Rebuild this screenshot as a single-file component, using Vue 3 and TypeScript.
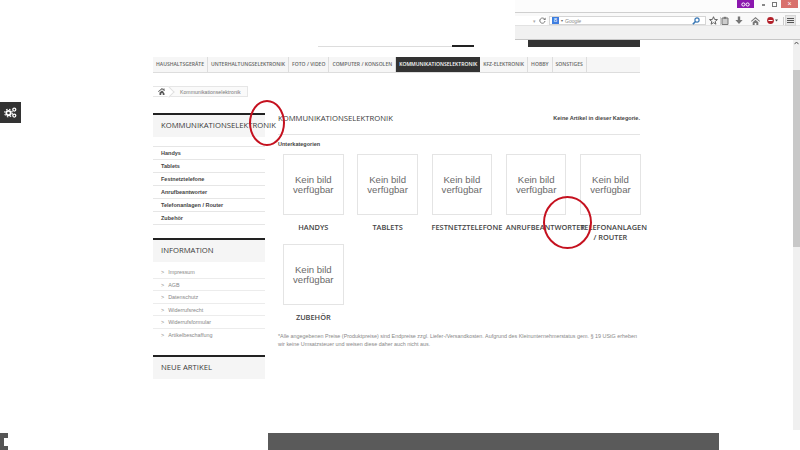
<script setup lang="ts">
const navItems = [
  'Haushaltsgeräte',
  'Unterhaltungselektronik',
  'Foto / Video',
  'Computer / Konsolen',
  'Kommunikationselektronik',
  'KFZ-Elektronik',
  'Hobby',
  'Sonstiges',
];
const subNav = ['Handys', 'Tablets', 'Festnetztelefone', 'Anrufbeantworter', 'Telefonanlagen / Router', 'Zubehör'];
const infoLinks = ['Impressum', 'AGB', 'Datenschutz', 'Widerrufsrecht', 'Widerrufsformular', 'Artikelbeschaffung'];
const tiles = ['Handys', 'Tablets', 'Festnetztelefone', 'Anrufbeantworter', 'Telefonanlagen / Router', 'Zubehör'];
</script>

<template>
  <div class="page">
    <div class="wrap">
      <div class="header">
        <div class="search-line"></div>
        <div class="search-btn"></div>
        <div class="cart-bar"></div>
      </div>

      <ul class="nav">
        <li v-for="item in navItems" :key="item" :class="{ active: item === 'Kommunikationselektronik' }">{{ item }}</li>
      </ul>

      <div class="crumb">
        <span class="crumb-home">
          <svg width="8" height="7" viewBox="0 0 16 14"><path d="M8 0 0 7l1 1.2L8 2.4l7 5.8L16 7l-3-2.5V1h-2v1.8zM3 9v5h3.5v-3.5h3V14H13V9L8 4.8z" fill="#555" /></svg>
        </span>
        <span class="crumb-text">Kommunikationselektronik</span>
      </div>

      <div class="columns">
        <aside class="sidebar">
          <h3 class="side-title">Kommunikationselektronik</h3>
          <ul class="side-list">
            <li v-for="item in subNav" :key="item">{{ item }}</li>
          </ul>
          <h3 class="side-title">Information</h3>
          <ul class="info-list">
            <li v-for="item in infoLinks" :key="item"><span class="arrow">&gt;</span>{{ item }}</li>
          </ul>
          <h3 class="side-title">Neue Artikel</h3>
        </aside>

        <main class="content">
          <div class="title-row">
            <h1>Kommunikationselektronik</h1>
            <span class="empty-note">Keine Artikel in dieser Kategorie.</span>
          </div>
          <div class="sub-head">Unterkategorien</div>
          <div class="tiles">
            <div v-for="tile in tiles" :key="tile" class="tile">
              <div class="no-image">Kein bild<br />verfügbar</div>
              <div class="tile-label">{{ tile }}</div>
            </div>
          </div>
          <p class="footnote">*Alle angegebenen Preise (Produktpreise) sind Endpreise zzgl. Liefer-/Versandkosten. Aufgrund des Kleinunternehmerstatus gem. § 19 UStG erheben wir keine Umsatzsteuer und weisen diese daher auch nicht aus.</p>
        </main>
      </div>
    </div>

    <div class="footer">
      <div class="footer-stub"><span></span></div>
      <div class="footer-bar"></div>
    </div>

    <div class="side-tab">
      <svg width="13" height="11" viewBox="0 0 13 11" fill="none" stroke="#fff">
        <circle cx="4.5" cy="6" r="2.2" stroke-width="1.8" />
        <circle cx="4.5" cy="6" r="3.8" stroke-width="1.2" stroke-dasharray="1.5 1.5" />
        <circle cx="10.3" cy="2.6" r="1.5" stroke-width="1.3" />
        <circle cx="10.3" cy="8.6" r="1.5" stroke-width="1.3" />
      </svg>
    </div>

    <div class="ring ring-one"></div>
    <div class="ring ring-two"></div>

    <div class="scrollbar">
      <svg class="scroll-up" width="5" height="4" viewBox="0 0 5 4"><path d="M.5 3.2 2.5 1l2 2.2" fill="none" stroke="#555" /></svg>
      <div class="scroll-thumb"></div>
    </div>

    <div class="browser">
      <div class="window-row">
        <div class="mask"><svg width="9" height="5" viewBox="0 0 9 5"><circle cx="2.4" cy="2.5" r="1.6" fill="none" stroke="#fff" /><circle cx="6.6" cy="2.5" r="1.6" fill="none" stroke="#fff" /></svg></div>
        <span class="win-min"></span>
        <span class="win-max"></span>
        <div class="win-close">×</div>
      </div>
      <div class="tool-row">
        <div class="url-box">
          <span class="url-arrow">▾</span>
          <svg width="7" height="7" viewBox="0 0 7 7"><path d="M5.6 2.2A2.6 2.6 0 1 0 6 4" fill="none" stroke="#777" stroke-width="1" /><path d="M6.6.6v2.5H4.2z" fill="#777" /></svg>
        </div>
        <div class="search-box">
          <span class="g-logo">8</span>
          <span class="search-arrow">▾</span>
          <span class="search-name">Google</span>
          <svg class="search-glass" width="8" height="8" viewBox="0 0 8 8"><circle cx="5" cy="3" r="2.1" fill="none" stroke="#3a78b5" stroke-width="1.2" /><path d="M3.4 4.6.8 7.2" stroke="#3a78b5" stroke-width="1.5" /></svg>
        </div>
        <svg class="tool-star" width="9" height="9" viewBox="0 0 10 10"><path d="M5 .8 6.2 3.8l3.2.2-2.5 2 .8 3.1L5 7.4 2.3 9.1 3.1 6 .6 4l3.2-.2z" fill="none" stroke="#555" /></svg>
        <span class="tool-sep"></span>
        <svg class="tool-clip" width="8" height="9" viewBox="0 0 8 9"><path d="M1 2h6v6.5H1z" fill="#ccc" stroke="#777" /><path d="M2.7.8h2.6v2H2.7z" fill="#777" /></svg>
        <svg class="tool-down" width="8" height="9" viewBox="0 0 8 9"><path d="M2.8.5h2.4v3.6H7.6L4 8 .4 4.1h2.4z" fill="#777" /></svg>
        <svg class="tool-home" width="9" height="8" viewBox="0 0 16 14"><path d="M8 0 0 7l1 1.2L8 2.4l7 5.8L16 7zM3 9v5h3.5v-3.5h3V14H13V9L8 4.8z" fill="#777" /></svg>
        <svg class="tool-abp" width="11" height="7" viewBox="0 0 11 7"><circle cx="3.5" cy="3.5" r="3.4" fill="#b3202a" /><path d="M1.4 3.5h4.2" stroke="#fff" /><path d="M8 2.5h3L9.5 4.5z" fill="#444" /></svg>
        <span class="tool-sep menu-sep"></span>
        <div class="menu-btn"><span></span><span></span><span></span></div>
      </div>
      <div class="bookmark-row"></div>
    </div>
  </div>
</template>

<style>
html,
body {
  margin: 0;
  background: #fff;
}
</style>

<style scoped>
.page {
  position: relative;
  display: flex;
  flex-direction: column;
  width: 800px;
  height: 450px;
  overflow: hidden;
  background: #fff;
  font-family: "Liberation Sans", Arial, sans-serif;
}
ul {
  list-style: none;
  margin: 0;
  padding: 0;
}
.wrap {
  width: 487px;
  margin-left: 153px;
}
.header {
  display: flex;
  align-items: flex-end;
  height: 47px;
  padding-left: 165px;
}
.search-line {
  width: 134px;
  height: 1px;
  background: #ddd;
}
.search-btn {
  width: 22px;
  height: 2px;
  background: #222;
}
.cart-bar {
  width: 112px;
  height: 7px;
  margin-left: 54px;
  background: #333;
}
.nav {
  display: flex;
  height: 16px;
  margin-top: 10px;
  background: #f6f6f6;
  border-bottom: 1px solid #ddd;
  box-sizing: border-box;
}
.nav li {
  padding: 0 3px;
  border-right: 1px solid #ddd;
  font-family: "Open Sans", sans-serif;
  font-size: 5.07px;
  font-weight: 600;
  line-height: 15px;
  color: #666;
  text-transform: uppercase;
  white-space: nowrap;
}
.nav li.active {
  background: #333;
  border-right: 0;
  color: #fff;
}
.crumb {
  display: flex;
  align-items: center;
  width: 95px;
  height: 11px;
  margin-top: 13px;
  background: #fafafa;
  border: 1px solid #e6e6e6;
  border-left: 0;
  box-sizing: border-box;
  font-size: 5.2px;
  color: #777;
}
.crumb-home {
  position: relative;
  display: flex;
  align-items: center;
  justify-content: center;
  width: 17px;
  height: 100%;
  background: #fff;
}
.crumb-home::after {
  content: "";
  position: absolute;
  top: 0.5px;
  right: -3px;
  width: 7px;
  height: 7px;
  background: #fff;
  border-top: 1px solid #e0e0e0;
  border-right: 1px solid #e0e0e0;
  transform: rotate(45deg);
}
.crumb-text {
  margin-left: 10px;
  white-space: nowrap;
}
.columns {
  display: flex;
  margin-top: 16px;
}
.sidebar {
  flex: none;
  width: 112px;
}
.side-title {
  height: 24px;
  margin: 0;
  padding-left: 8px;
  background: #f5f5f5;
  border-top: 2px solid #222;
  box-sizing: border-box;
  font-family: "Open Sans", sans-serif;
  font-size: 7.7px;
  font-weight: 400;
  line-height: 20px;
  color: #3a3a3a;
  text-transform: uppercase;
  white-space: nowrap;
}
.side-list {
  margin: 9px 0 13px;
  border-top: 1px solid #e6e6e6;
}
.side-list li {
  height: 13px;
  padding-left: 8px;
  border-bottom: 1px solid #e6e6e6;
  box-sizing: border-box;
  font-size: 5.5px;
  font-weight: 700;
  line-height: 12px;
  color: #444;
}
.info-list {
  margin: 4px 0 13px;
}
.info-list li {
  height: 12.6px;
  padding-left: 8px;
  border-bottom: 1px solid #ececec;
  box-sizing: border-box;
  font-size: 5.4px;
  line-height: 12px;
  color: #888;
}
.info-list li:last-child {
  border-bottom: 0;
}
.arrow {
  margin-right: 4px;
}
.content {
  flex: none;
  width: 362px;
  margin-left: 13px;
}
.title-row {
  display: flex;
  justify-content: space-between;
  height: 22px;
  border-bottom: 1px solid #e4e4e4;
  box-sizing: border-box;
}
.title-row h1 {
  margin: 0;
  font-family: "Open Sans", sans-serif;
  font-size: 7.7px;
  font-weight: 400;
  line-height: 11px;
  color: #3a3a3a;
  text-transform: uppercase;
  white-space: nowrap;
}
.empty-note {
  font-size: 5.55px;
  font-weight: 700;
  line-height: 11px;
  color: #444;
}
.sub-head {
  margin-top: 5px;
  font-size: 5.5px;
  font-weight: 700;
  line-height: 8px;
  color: #444;
}
.tiles {
  display: grid;
  grid-template-columns: repeat(5, 60.6px);
  column-gap: 13.7px;
  row-gap: 2px;
  margin-top: 6px;
  padding-left: 5px;
}
.no-image {
  display: flex;
  align-items: center;
  justify-content: center;
  height: 61px;
  border: 1px solid #e4e4e4;
  box-sizing: border-box;
  font-size: 9.6px;
  line-height: 9.8px;
  color: #6a6a6a;
  text-align: center;
}
.tile-label {
  height: 20px;
  margin-top: 7px;
  font-family: "Open Sans", sans-serif;
  font-size: 7.4px;
  font-weight: 600;
  line-height: 10px;
  color: #444;
  text-align: center;
  text-transform: uppercase;
}
.footnote {
  margin: 1px 0 0;
  font-size: 5.4px;
  line-height: 7.6px;
  color: #888;
}
.footer {
  display: flex;
  margin-top: auto;
}
.footer-stub {
  display: flex;
  align-items: center;
  width: 8px;
  height: 17px;
  margin-right: 260px;
  background: #555;
}
.footer-stub span {
  width: 4px;
  height: 8px;
  margin-left: 4px;
  background: #fff;
}
.footer-bar {
  width: 451px;
  height: 17px;
  background: #5a5a5a;
}
.side-tab {
  position: absolute;
  top: 102px;
  left: 0;
  display: flex;
  align-items: center;
  justify-content: center;
  width: 21px;
  height: 21px;
  background: #333;
}
.ring {
  position: absolute;
  border: 2px solid #c5111f;
  border-radius: 50%;
  box-sizing: border-box;
}
.ring-one {
  top: 100px;
  left: 249px;
  width: 36px;
  height: 46px;
}
.ring-two {
  top: 196px;
  left: 543px;
  width: 49px;
  height: 53px;
}
.scrollbar {
  position: absolute;
  top: 40px;
  right: 0;
  width: 7px;
  height: 390px;
  background: #f0f0f0;
}
.scroll-up {
  position: absolute;
  top: 1px;
  left: 1px;
}
.scroll-thumb {
  position: absolute;
  top: 30px;
  left: 0;
  width: 7px;
  height: 177px;
  background: #c8c8c8;
}
.browser {
  position: absolute;
  top: 0;
  right: 0;
  width: 285px;
  height: 40px;
  background: #f1f1f1;
  border-bottom: 1px solid #c6c6c6;
  box-sizing: border-box;
}
.window-row {
  display: flex;
  align-items: flex-start;
  justify-content: flex-end;
  height: 12px;
  background: #fcfcfc;
  border-bottom: 1px solid #cfcfcf;
}
.mask {
  display: flex;
  align-items: center;
  justify-content: center;
  width: 17px;
  height: 8px;
  background: #8b17ae;
}
.win-min {
  width: 3px;
  height: 1.5px;
  margin: 4px 0 0 8px;
  background: #888;
}
.win-max {
  width: 5px;
  height: 5px;
  margin: 2px 0 0 7px;
  border: 1px solid #777;
  box-sizing: border-box;
}
.win-close {
  width: 17px;
  height: 8px;
  margin: 0 2px 0 4px;
  background: #d8706c;
  color: #fff;
  font-size: 7px;
  line-height: 8px;
  text-align: center;
}
.tool-row {
  display: flex;
  align-items: center;
  height: 13px;
  padding-top: 3px;
  background: #f9f9f9;
  border-bottom: 1px solid #e2e2e2;
  box-sizing: border-box;
}
.url-box {
  display: flex;
  align-items: center;
  justify-content: flex-end;
  gap: 3px;
  width: 32px;
  height: 9px;
  padding-right: 1px;
  background: #fff;
  box-sizing: border-box;
}
.url-arrow {
  font-size: 5px;
  color: #aaa;
}
.search-box {
  display: flex;
  align-items: center;
  width: 157px;
  height: 9px;
  margin-left: 2px;
  padding: 0 2px;
  background: #fff;
  border: 1px solid #d5d5d5;
  box-sizing: border-box;
}
.g-logo {
  width: 7px;
  height: 7px;
  background: #3f7ee0;
  color: #fff;
  font-size: 6px;
  line-height: 7px;
  text-align: center;
}
.search-arrow {
  margin-left: 2px;
  font-size: 4px;
  color: #666;
}
.search-name {
  margin-left: 2px;
  font-size: 5px;
  font-style: italic;
  color: #888;
}
.search-glass {
  margin-left: auto;
  margin-right: 3px;
}
.tool-star {
  margin-left: 3px;
}
.tool-sep {
  width: 1px;
  height: 8px;
  margin-left: 2px;
  background: #ccc;
}
.tool-down {
  margin-left: 6px;
}
.tool-home {
  margin-left: 7.5px;
}
.tool-abp {
  margin-left: 7px;
}
.menu-sep {
  margin-left: 5.5px;
}
.menu-btn {
  display: flex;
  flex-direction: column;
  justify-content: center;
  align-items: center;
  gap: 1px;
  width: 11px;
  height: 11px;
  margin-left: 1px;
  background: #e6e6e6;
  border: 1px solid #d5d5d5;
  box-sizing: border-box;
}
.menu-btn span {
  width: 7px;
  height: 1px;
  background: #555;
}
.bookmark-row {
  height: 13px;
}
</style>
